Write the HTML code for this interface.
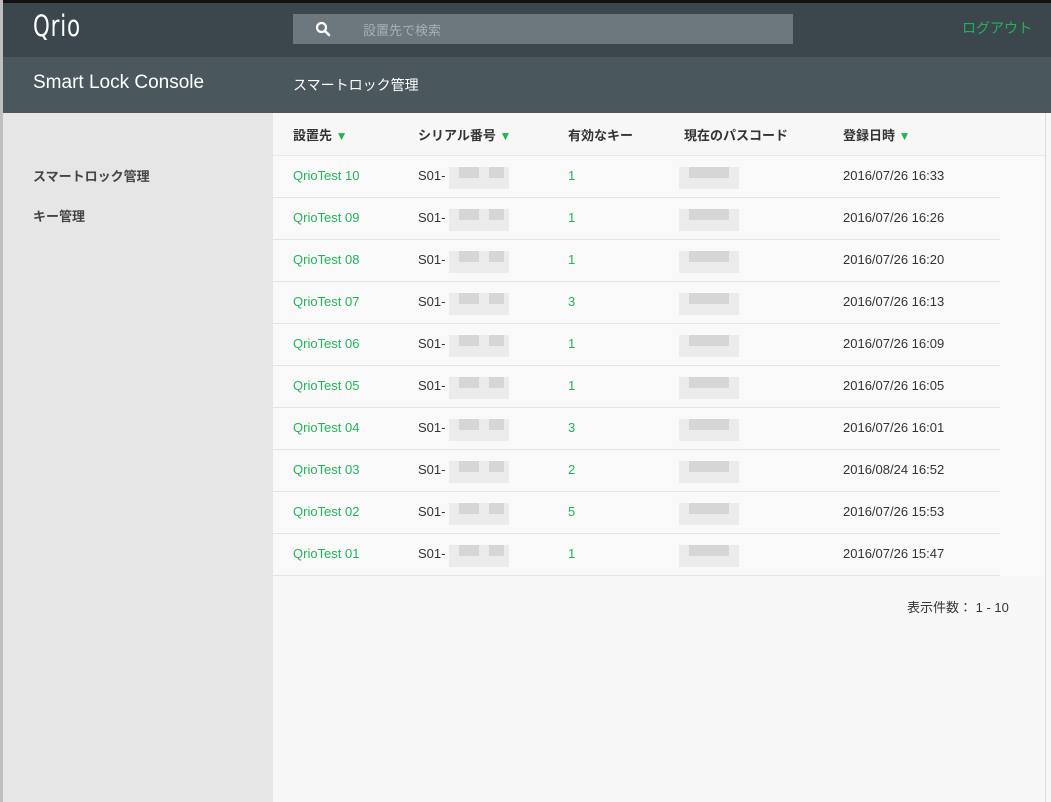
<!DOCTYPE html>
<html><head><meta charset="utf-8"><style>
*{margin:0;padding:0;box-sizing:border-box}
body{width:1051px;height:802px;overflow:hidden;background:#f7f7f7;font-family:"Liberation Sans","Noto Sans CJK JP",sans-serif;position:relative}
.abs{position:absolute}
#top{left:0;top:0;width:1051px;height:57px;background:#3b474d;border-top:3px solid #111}
#sub{left:0;top:57px;width:1051px;height:56px;background:#4a575d}
#lb{left:0;top:0;width:3px;height:802px;background:#bfbfbf}
#side{left:3px;top:113px;width:270px;height:689px;background:#e6e6e6}
#rb{left:1045px;top:113px;width:1px;height:689px;background:#ddd}
.logo{left:33px;top:9px;color:#fff;font-size:29px;letter-spacing:1px;font-family:"DejaVu Sans Condensed","Liberation Sans Narrow",sans-serif;transform:scaleX(.82);transform-origin:left}
#search{left:293px;top:14px;width:500px;height:30px;background:#6c787d}
#search span{position:absolute;left:70px;top:6px;color:#a7afb3;font-size:13px}
.logout{left:962px;top:18px;color:#20b35a;font-size:14px}
.t1{left:33px;top:72px;color:#fff;font-size:19px}
.t2{left:293px;top:75px;color:#fff;font-size:14px}
.nav{left:33px;color:#444;font-size:13px;font-weight:bold}
.hd{top:125px;color:#333;font-size:13px;font-weight:bold}
.tri{color:#22b35b;font-size:12px}
.row{left:273px;width:772px;height:42px;background:#f9f9f9}
.line{position:absolute;left:0;bottom:0;width:727px;height:1px;background:#e4e4e4}
.c{position:absolute;top:12px;font-size:13px;color:#333}
.g{color:#22b35b}
.blk{position:absolute;top:11px;width:60px;height:22px;background:#ebebeb}
.blk i{position:absolute;background:#d6d6d6}
.foot{left:907px;top:597px;font-size:13px;color:#333}
</style></head><body>
<div id="top" class="abs"></div>
<div id="sub" class="abs"></div>
<div id="lb" class="abs"></div>
<div id="side" class="abs"></div>
<div class="abs logo">Qrio</div>
<div id="search" class="abs"><svg style="position:absolute;left:22px;top:7px" width="16" height="16" viewBox="0 0 16 16"><circle cx="6.5" cy="6.5" r="4.5" fill="none" stroke="#fff" stroke-width="2.2"/><line x1="10" y1="10" x2="14" y2="14" stroke="#fff" stroke-width="2.6" stroke-linecap="round"/></svg><span>設置先で検索</span></div>
<div class="abs logout">ログアウト</div>
<div class="abs t1">Smart Lock Console</div>
<div class="abs t2">スマートロック管理</div>
<div class="abs nav" style="top:166px">スマートロック管理</div>
<div class="abs nav" style="top:206px">キー管理</div>
<div class="abs" style="left:273px;top:113px;width:772px;height:43px;background:#f7f7f7;border-bottom:1px solid #e8e8e8"></div>
<div class="abs hd" style="left:293px">設置先 <span class="tri">▼</span></div>
<div class="abs hd" style="left:418px">シリアル番号 <span class="tri">▼</span></div>
<div class="abs hd" style="left:568px">有効なキー</div>
<div class="abs hd" style="left:684px">現在のパスコード</div>
<div class="abs hd" style="left:843px">登録日時 <span class="tri">▼</span></div>
<div id="rows"></div>
<div id="rb" class="abs"></div>
<div class="abs foot">表示件数： 1 - 10</div>
<script>
var d=[["10","1","2016/07/26 16:33"],["09","1","2016/07/26 16:26"],["08","1","2016/07/26 16:20"],["07","3","2016/07/26 16:13"],["06","1","2016/07/26 16:09"],["05","1","2016/07/26 16:05"],["04","3","2016/07/26 16:01"],["03","2","2016/08/24 16:52"],["02","5","2016/07/26 15:53"],["01","1","2016/07/26 15:47"]];
var h="";
d.forEach(function(r,i){
h+='<div class="abs row" style="top:'+(156+i*42)+'px"><div class="line"></div>'+
'<div class="c g" style="left:20px">QrioTest '+r[0]+'</div>'+
'<div class="c" style="left:145px">S01-</div>'+
'<div class="blk" style="left:176px"><i style="left:10px;top:0;width:20px;height:11px"></i><i style="left:40px;top:0;width:15px;height:11px"></i></div>'+
'<div class="c g" style="left:295px">'+r[1]+'</div>'+
'<div class="blk" style="left:406px"><i style="left:10px;top:0;width:40px;height:11px"></i></div>'+
'<div class="c" style="left:570px">'+r[2]+'</div></div>';
});
document.getElementById("rows").innerHTML=h;
</script>
</body></html>
